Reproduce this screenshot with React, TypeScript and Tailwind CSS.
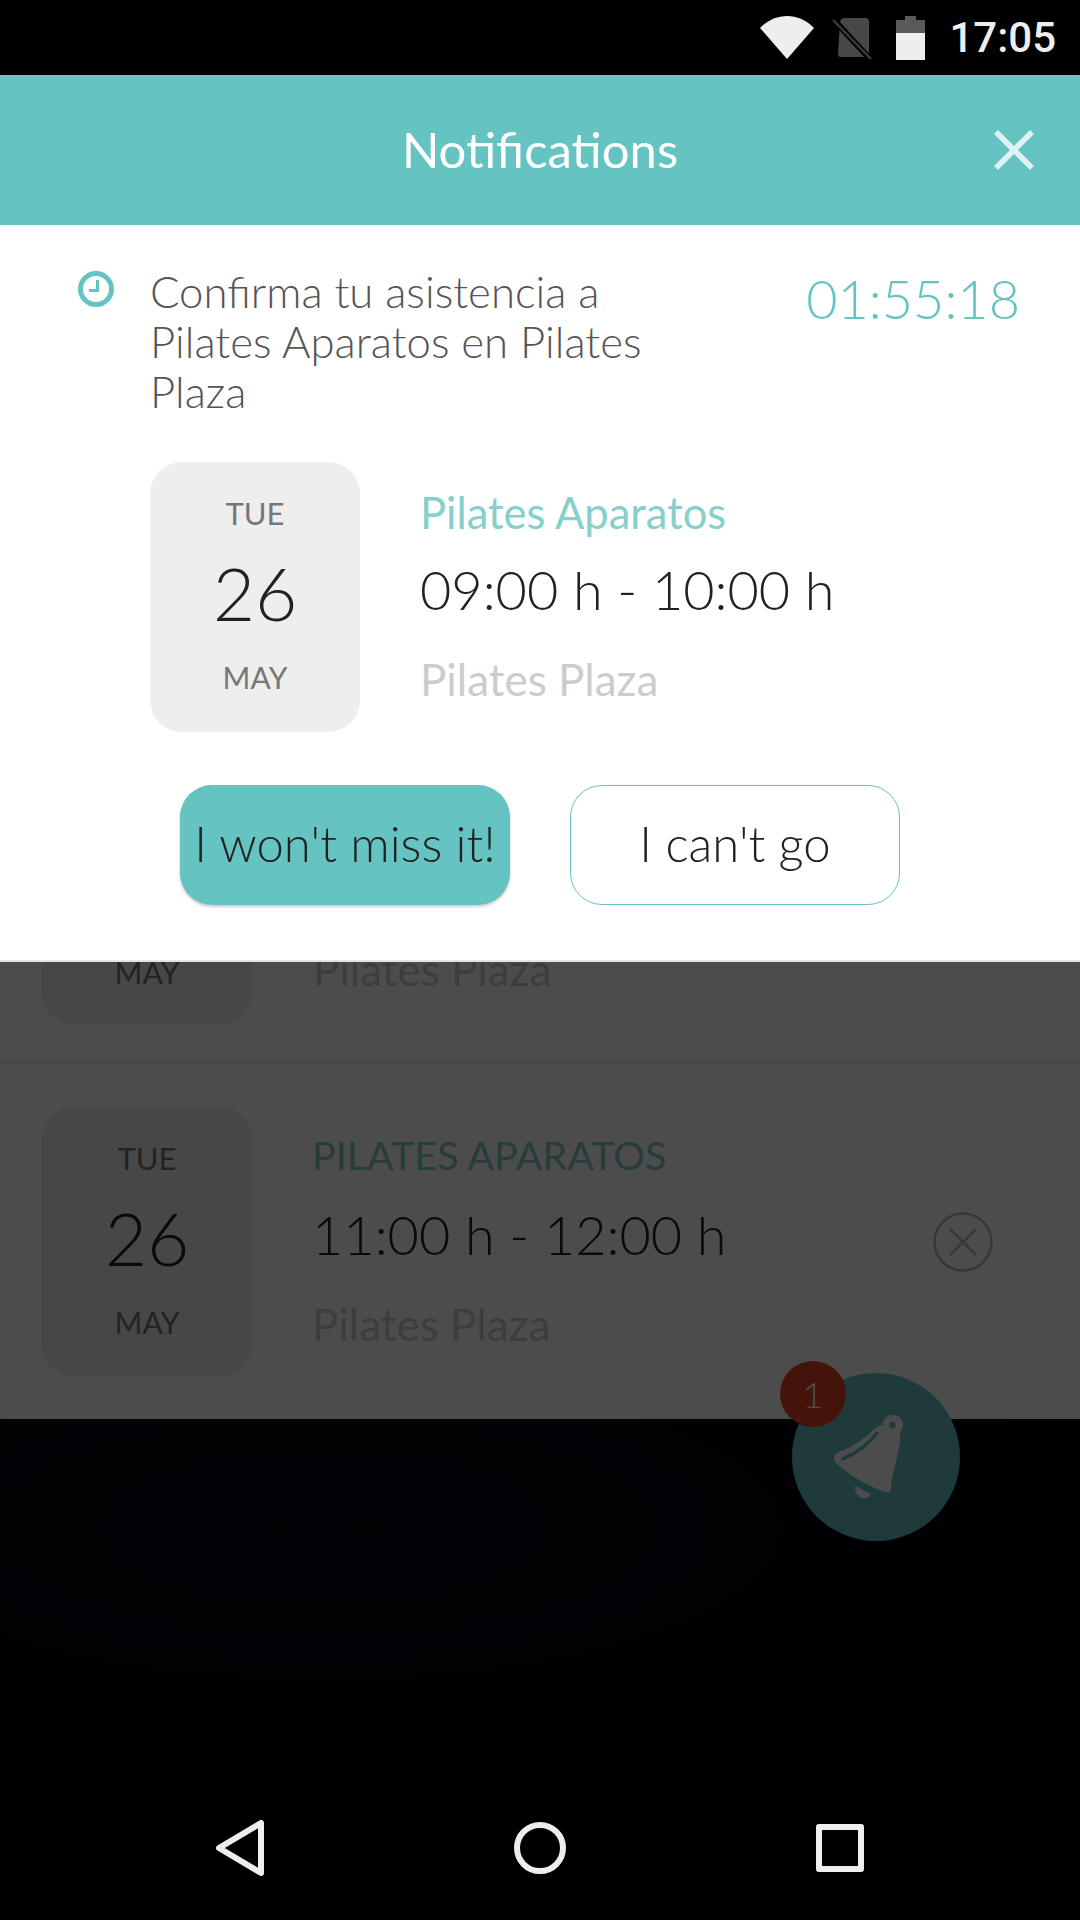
const font = "font-['Lato','Liberation_Sans',sans-serif]";

function DateCard() {
  return (
    <div className="flex h-[270px] w-[210px] shrink-0 flex-col items-center rounded-[32px] bg-[#eeeeee] pt-[31px]">
      <span className="h-[40px] text-[31px] leading-[40px] text-[#777777]">TUE</span>
      <span className="mt-[18px] h-[84px] text-[73px] leading-[84px] font-light text-[#222222]">26</span>
      <span className="mt-[22px] h-[40px] text-[30px] leading-[40px] text-[#777777]">MAY</span>
    </div>
  );
}

function EventText({ title, time, titleClass, timeGap }: { title: string; time: string; titleClass: string; timeGap: string }) {
  return (
    <>
      <span className={`h-[44px] leading-[44px] ${titleClass}`}>{title}</span>
      <span className={`h-[64px] text-[54px] leading-[64px] font-light text-[#222222] ${timeGap}`}>{time}</span>
      <span className="mt-[35px] h-[44px] text-[44px] leading-[44px] text-[#cccccc]">Pilates Plaza</span>
    </>
  );
}

export default function App() {
  return (
    <div className={`flex h-[1920px] w-[1080px] flex-col overflow-hidden bg-black ${font}`}>
      {/* status bar */}
      <div className="flex h-[75px] shrink-0 items-center justify-end bg-black">
        <svg viewBox="0 0 54 43" className="mr-[18px] h-[43px] w-[54px]">
          <path d="M0 12 C15 -4 39 -4 54 12 L27 43 Z" fill="#eeeeee" />
        </svg>
        <svg viewBox="0 0 42 44" className="mr-[22px] h-[44px] w-[42px]">
          <path d="M8 6 C8 4 10 2 12 2 L34 2 C36 2 37 4 37 6 L37 38 C37 40 36 41 34 41 L9 41 C7 41 6 40 6 38 Z" fill="#484848" />
          <path d="M2 4 L38 43" stroke="#000" strokeWidth="6" />
          <path d="M1 4 L39 43" stroke="#3a3a3a" strokeWidth="2.5" />
        </svg>
        <svg viewBox="0 0 29 44" className="mr-[24px] h-[44px] w-[29px]">
          <path d="M9 0 H20 V4 H29 V17 H0 V4 H9 Z" fill="#5a5a5a" />
          <rect x="0" y="17" width="29" height="27" fill="#eeeeee" />
        </svg>
        <span className="mr-[24px] font-['Roboto',sans-serif] text-[42px] font-medium leading-none text-[#eeeeee]">17:05</span>
      </div>

      {/* content */}
      <div className="relative flex-1 overflow-hidden">
        {/* page below */}
        <div className="h-[643px] bg-white" />
        <div className="bg-white">
          <div className="flex h-[347px] items-center border-b-[4px] border-[#f2f2f2] pl-[42px]">
            <div className="h-[270px] w-[210px] shrink-0 rounded-[32px] bg-[#eeeeee] pt-[197px] text-center">
              <span className="text-[30px] leading-[40px] text-[#777777]">MAY</span>
            </div>
            <div className="ml-[61px] flex flex-col pb-[8px] pt-[167px]">
              <span className="h-[44px] text-[44px] leading-[44px] text-[#cccccc]">Pilates Plaza</span>
            </div>
          </div>
          <div className="flex h-[354px] items-center pl-[42px]">
            <DateCard />
            <div className="ml-[60px] flex flex-col pb-[6px]">
              <EventText title="PILATES APARATOS" time="11:00 h - 12:00 h" titleClass="text-[39.5px] text-[#7fcdc8]" timeGap="mt-[26px]" />
            </div>
            <svg viewBox="0 0 60 60" className="ml-auto mr-[87px] h-[60px] w-[60px]" fill="none" stroke="#b8b8b8" strokeWidth="2.5">
              <circle cx="30" cy="30" r="28.5" />
              <path d="M17 17 L43 43 M43 17 L17 43" />
            </svg>
          </div>
        </div>
        <div className="absolute bottom-0 left-0 right-0 h-[361px] bg-[radial-gradient(ellipse_at_30%_30%,#0a0c18_0%,#02030a_70%)]" />

        {/* FAB */}
        <div className="absolute left-[792px] top-[1298px] flex h-[168px] w-[168px] items-center justify-center rounded-full bg-[#65c3c2]">
          <svg viewBox="0 0 70 84" className="mr-[15px] h-[84px] w-[70px]" fill="#ffffff">
            <path d="M3 38 C14 34 28 26 38 16 C42 12 47 10 49 10 A10 10 0 1 1 66 17 C67 25 65 34 63 42 C61 52 57 65 57 73 C57 76 55 77 52 77 C35 72 18 62 3 49 C-1 46 -1 41 3 38 Z" />
            <path d="M21 71 L37 79 C33 86 21 85 21 71 Z" />
            <circle cx="58.5" cy="10" r="3.3" fill="#65c3c2" />
            <path d="M9 44 C22 38 34 30 43 18" fill="none" stroke="#65c3c2" strokeWidth="3.5" strokeLinecap="round" />
          </svg>
        </div>
        <div className="absolute left-[780px] top-[1286px] flex h-[66px] w-[66px] items-center justify-center rounded-full bg-[#e3401f] text-[36px] font-light text-white">1</div>

        {/* scrim */}
        <div className="absolute inset-0 bg-black/70" />

        {/* modal */}
        <div className="absolute left-0 right-0 top-0 h-[887px] border-b-[2px] border-[#e4e4e4] bg-white">
          <div className="relative flex h-[150px] items-center justify-center bg-[#65c3c2] pb-[2px]">
            <span className="text-[49px] leading-none text-white">Notifications</span>
            <svg viewBox="0 0 40 40" className="absolute right-[46px] top-[55px] h-[40px] w-[40px]" stroke="#e0f3f2" strokeWidth="5.5">
              <path d="M2 2 L38 38 M38 2 L2 38" />
            </svg>
          </div>
          <div className="flex pl-[78px] pr-[60px] pt-[46px]">
            <svg viewBox="0 0 36 36" className="h-[36px] w-[36px] shrink-0" fill="none" stroke="#65c3c2" strokeWidth="5">
              <circle cx="18" cy="18" r="15.5" />
              <path d="M19.5 9 V19.5 H11" strokeWidth="3" />
            </svg>
            <p className="-mt-[5px] ml-[36px] w-[530px] text-[43.7px] font-light leading-[50px] text-[#555555]">
              Confirma tu asistencia a Pilates Aparatos en Pilates Plaza
            </p>
            <span className="-mt-[2px] ml-auto text-[54px] font-light leading-[60px] text-[#65c3c2]">01:55:18</span>
          </div>
          <div className="mt-[46px] flex pl-[150px]">
            <DateCard />
            <div className="ml-[60px] flex flex-col pt-[28px]">
              <EventText title="Pilates Aparatos" time="09:00 h - 10:00 h" titleClass="text-[43.5px] text-[#85d0cb]" timeGap="mt-[24px]" />
            </div>
          </div>
          <div className="mt-[53px] flex pl-[180px]">
            <button className="h-[120px] w-[330px] rounded-[32px] bg-[#65c3c2] pb-[2px] text-[49px] font-light text-[#222222] shadow-[0_2px_3px_rgba(0,0,0,0.2)]">I won't miss it!</button>
            <button className="ml-[60px] h-[120px] w-[330px] rounded-[32px] border border-[#65c3c2] bg-white pb-[2px] text-[49px] font-light text-[#222222]">I can't go</button>
          </div>
        </div>
      </div>

      {/* nav bar */}
      <div className="flex h-[140px] shrink-0 items-center bg-black pb-[5px]">
        <svg viewBox="0 0 48 56" className="ml-[216px] h-[56px] w-[48px]" fill="none" stroke="#eeeeee" strokeWidth="6" strokeLinejoin="round">
          <path d="M45 3 V53 L3 28 Z" />
        </svg>
        <div className="ml-[250px] h-[52px] w-[52px] rounded-full border-[6px] border-[#eeeeee]" />
        <div className="ml-[250px] h-[48px] w-[48px] rounded-[3px] border-[6px] border-[#eeeeee]" />
      </div>
    </div>
  );
}
